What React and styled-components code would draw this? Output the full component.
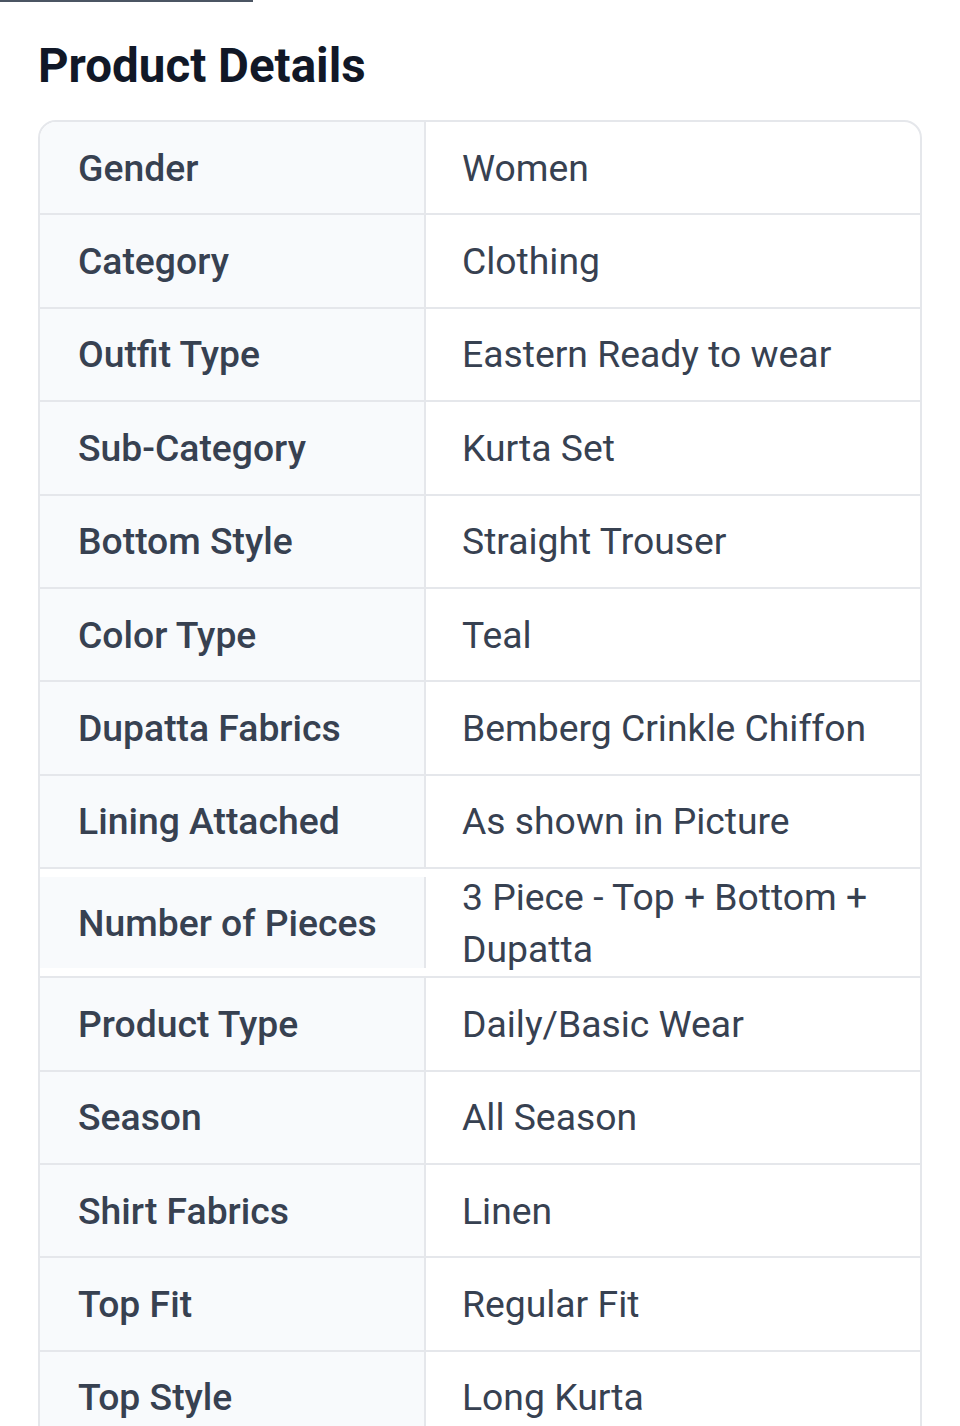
import React from "react";
import styled, { createGlobalStyle } from "styled-components";

const GlobalStyle = createGlobalStyle`
  body {
    margin: 0;
    background: #fff;
    font-family: Roboto, "Noto Sans", "Liberation Sans", sans-serif;
  }
`;

const Page = styled.div`
  padding: 0 38px 40px 38px;
`;

const TopRule = styled.div`
  width: 253px;
  height: 2px;
  background: #4b5563;
`;

const Title = styled.h2`
  margin: 36px 0 26px;
  font-size: 47.5px;
  line-height: 56px;
  font-weight: 700;
  color: #111827;
`;

const Table = styled.div`
  border: 2px solid #e5e7eb;
  border-radius: 18px;
  overflow: hidden;
`;

const Row = styled.div`
  display: flex;
  align-items: center;
  border-top: ${(p) => (p.first ? "none" : "2px solid #e5e7eb")};
`;

const Label = styled.div`
  box-sizing: border-box;
  width: 386px;
  min-height: 91.4px;
  padding: 0 16px 0 38px;
  display: flex;
  align-items: center;
  background: #f8fafc;
  border-right: 2px solid #e5e7eb;
  font-size: 37.3px;
  font-weight: 500;
  color: #374151;
`;

const Value = styled.div`
  flex: 1;
  padding: 1.5px 24px 1.5px 36px;
  font-size: 37.3px;
  line-height: 52px;
  font-weight: 400;
  color: #374151;
`;

const details = [
  ["Gender", "Women"],
  ["Category", "Clothing"],
  ["Outfit Type", "Eastern Ready to wear"],
  ["Sub-Category", "Kurta Set"],
  ["Bottom Style", "Straight Trouser"],
  ["Color Type", "Teal"],
  ["Dupatta Fabrics", "Bemberg Crinkle Chiffon"],
  ["Lining Attached", "As shown in Picture"],
  ["Number of Pieces", "3 Piece - Top + Bottom + Dupatta"],
  ["Product Type", "Daily/Basic Wear"],
  ["Season", "All Season"],
  ["Shirt Fabrics", "Linen"],
  ["Top Fit", "Regular Fit"],
  ["Top Style", "Long Kurta"],
];

export default function App() {
  return (
    <>
      <GlobalStyle />
      <TopRule />
      <Page>
        <Title>Product Details</Title>
        <Table>
          {details.map(([label, value], i) => (
            <Row key={label} first={i === 0}>
              <Label>{label}</Label>
              <Value>{value}</Value>
            </Row>
          ))}
        </Table>
      </Page>
    </>
  );
}
